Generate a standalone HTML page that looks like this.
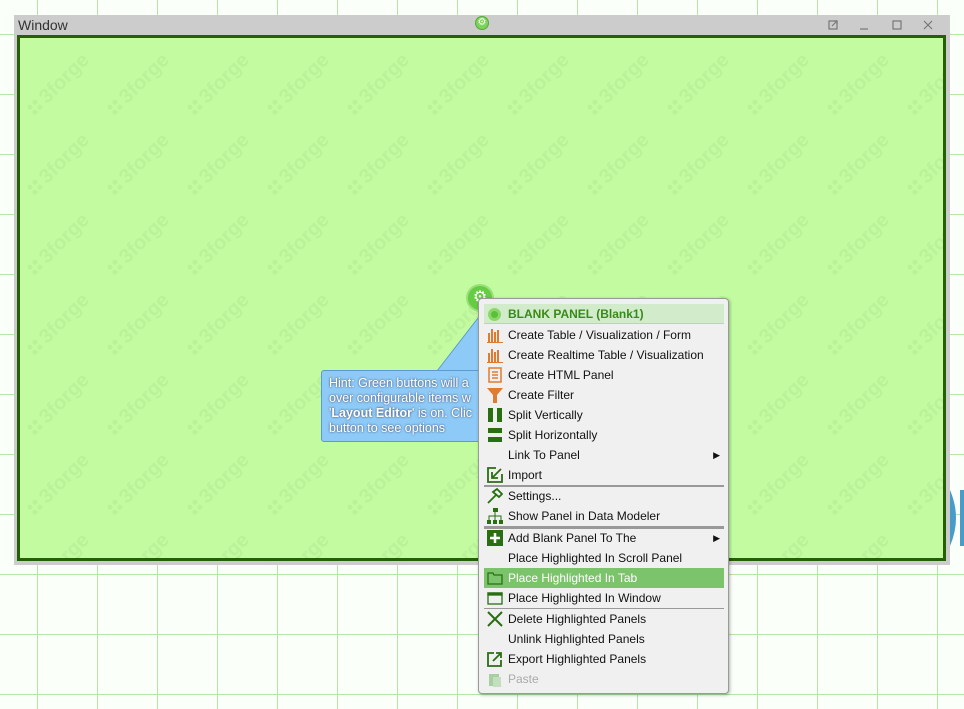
<!DOCTYPE html>
<html><head><meta charset="utf-8"><style>
*{box-sizing:border-box;margin:0;padding:0}
body{width:964px;height:709px;overflow:hidden;position:relative;background:#fbfffa;font-family:"Liberation Sans",Arial,sans-serif;
background-image:linear-gradient(to right,#b5e6a8 1px,transparent 1px),linear-gradient(to bottom,#b5e6a8 1px,transparent 1px);
background-size:60px 60px;background-position:37px 34px}
.win{position:absolute;left:14px;top:15px;width:936px;height:550px;background:#cccccc}
.title{position:absolute;left:4px;top:2px;font-size:14px;color:#333}
.panel{position:absolute;left:3px;top:20px;width:929px;height:526px;background:#c3fca0;border:3px solid #236006;overflow:hidden}
.menu{position:absolute;left:478px;top:298px;width:251px;height:396px;background:#f0f0f0;border:1px solid #9a9a9a;border-radius:4px;box-shadow:1px 1px 3px rgba(0,0,0,.3);font-size:12px;color:#111}
.it{position:absolute;left:5px;width:240px;height:20px;line-height:20px;padding-left:24px}
.ic{position:absolute;left:3px;top:2px;width:16px;height:16px}
.sep{position:absolute;left:5px;width:240px;height:2px;background:#999}
.arr{position:absolute;right:4px;top:0;font-size:9px}
.hint{position:absolute;left:321px;top:370px;width:160px;height:72px;background:#8ecaf7;border:1px solid #5a9bd0;border-radius:3px;color:#fff;font-size:12.5px;line-height:15px;padding:5px 7px;text-shadow:0 0 2px #335;overflow:hidden}
</style></head><body>
<div class="win">
<div class="title">Window</div>
<div style="position:absolute;left:461px;top:1px;width:14px;height:14px;border-radius:50%;background:#7bd35a;border:1px solid #5aa83a;color:#fff;font-size:10px;line-height:12px;text-align:center">⚙</div>
<svg style="position:absolute;left:814px;top:5px" width="110" height="12" stroke="#777" fill="none" stroke-width="1.2">
<rect x="1" y="1" width="8" height="8"/><path d="M4 6 L9 1 M6 1 H9 V4"/>
<path d="M32 9 H40"/><rect x="65" y="1" width="8" height="8"/><path d="M96 1 L104 9 M104 1 L96 9"/></svg>
<div class="panel">
<svg width="929" height="526" style="position:absolute;left:0;top:0">
<defs><pattern id="w" x="0" y="10" width="80" height="80" patternUnits="userSpaceOnUse">
<g transform="translate(10,62) rotate(-45)" fill="#b9f298"><circle cx="2" cy="-2" r="2.5"/><circle cx="2" cy="5" r="2.5"/><circle cx="9" cy="5" r="2.5"/><circle cx="9" cy="-2" r="2.5"/><text x="16" y="8" font-family="Liberation Sans" font-weight="bold" font-size="20">3forge</text></g>
</pattern></defs>
<rect width="929" height="526" fill="url(#w)"/></svg>
</div>
</div>
<svg style="position:absolute;left:948px;top:490px" width="16" height="56"><path d="M2 0 Q14 28 2 56 Z" fill="#4a9cc8"/><rect x="12" y="0" width="4" height="56" fill="#4a9cc8"/></svg>
<svg style="position:absolute;left:320px;top:280px" width="170" height="100"><path d="M117 91 L158 38 L170 38 L170 92 Z" fill="#8ecaf7"/><path d="M117 91 L158 38" stroke="#5a9bd0"/></svg>
<div class="hint">Hint: Green buttons will a<br>over configurable items w<br>'<b>Layout Editor</b>' is on. Clic<br>button to see options</div>
<div style="position:absolute;left:466px;top:284px;width:28px;height:28px;border-radius:50%;background:#66cc44;border:2px solid #9be07a;color:#fff;font-size:16px;line-height:24px;text-align:center">⚙</div>
<div class="menu">
<div class="it" style="top:5px;background:#d2eccb;color:#3a8a1a;font-weight:bold;border-bottom:1px solid #bcd">BLANK PANEL (Blank1)<span class="ic" style="border-radius:50%;background:#5cbf3a;width:13px;height:13px;top:4px;left:4px;border:3px solid #8ad86a"></span></div>
<div class="it" style="top:26px"><svg class="ic" viewBox="0 0 16 16" fill="#e07b32"><rect x="1" y="6" width="2" height="9"/><rect x="4" y="2" width="2" height="13"/><rect x="7" y="5" width="2" height="10"/><rect x="10" y="3" width="2" height="12"/><rect x="0" y="15" width="16" height="1"/></svg>Create Table / Visualization / Form</div>
<div class="it" style="top:46px"><svg class="ic" viewBox="0 0 16 16" fill="#e07b32"><rect x="1" y="6" width="2" height="9"/><rect x="4" y="2" width="2" height="13"/><rect x="7" y="5" width="2" height="10"/><rect x="10" y="3" width="2" height="12"/><rect x="0" y="15" width="16" height="1"/></svg>Create Realtime Table / Visualization</div>
<div class="it" style="top:66px"><svg class="ic" viewBox="0 0 16 16" fill="none" stroke="#e07b32" stroke-width="1.5"><rect x="2" y="1" width="12" height="14"/><path d="M5 5H11M5 8H11M5 11H11"/></svg>Create HTML Panel</div>
<div class="it" style="top:86px"><svg class="ic" viewBox="0 0 16 16" fill="#e07b32"><path d="M0 1H16L10 8V16H6V8Z"/></svg>Create Filter</div>
<div class="it" style="top:106px"><svg class="ic" viewBox="0 0 16 16" fill="#2a6e12"><rect x="1" y="1" width="5" height="14"/><rect x="10" y="1" width="5" height="14"/></svg>Split Vertically</div>
<div class="it" style="top:126px"><svg class="ic" viewBox="0 0 16 16" fill="#2a6e12"><rect x="1" y="1" width="14" height="5"/><rect x="1" y="10" width="14" height="5"/></svg>Split Horizontally</div>
<div class="it" style="top:146px">Link To Panel<span class="arr">▶</span></div>
<div class="it" style="top:166px"><svg class="ic" viewBox="0 0 16 16" fill="none" stroke="#2a6e12" stroke-width="1.8"><path d="M9 1H1V15H15V7"/><path d="M14 2L6 10M5 5V11H11"/></svg>Import</div>
<div class="sep" style="top:186px"></div>
<div class="it" style="top:187px"><svg class="ic" viewBox="0 0 16 16" fill="none" stroke="#2a6e12" stroke-width="1.8"><path d="M1 15L9 7M6 4L10 1L15 6L12 9Z"/></svg>Settings...</div>
<div class="it" style="top:207px"><svg class="ic" viewBox="0 0 16 16" fill="#2a6e12"><rect x="6" y="0" width="5" height="4"/><rect x="0" y="12" width="4" height="4"/><rect x="6" y="12" width="4" height="4"/><rect x="12" y="12" width="4" height="4"/><path d="M8 4V12M2 12V8H14V12" stroke="#2a6e12" fill="none"/></svg>Show Panel in Data Modeler</div>
<div class="sep" style="top:227px;height:3px"></div>
<div class="it" style="top:229px"><svg class="ic" viewBox="0 0 16 16"><rect width="16" height="16" fill="#2a6e12"/><path d="M8 3V13M3 8H13" stroke="#fff" stroke-width="2.5"/></svg>Add Blank Panel To The<span class="arr">▶</span></div>
<div class="it" style="top:249px">Place Highlighted In Scroll Panel</div>
<div class="it" style="top:269px;background:#7cc46c;color:#fff"><svg class="ic" viewBox="0 0 16 16" fill="none" stroke="#2a6e12" stroke-width="1.3"><path d="M1 3H6L7 5H15V14H1Z"/></svg>Place Highlighted In Tab</div>
<div class="it" style="top:289px"><svg class="ic" viewBox="0 0 16 16" fill="none" stroke="#2a6e12" stroke-width="1.3"><rect x="1" y="3" width="14" height="11"/><rect x="1" y="3" width="14" height="2" fill="#2a6e12"/></svg>Place Highlighted In Window</div>
<div class="sep" style="top:309px;height:1px"></div>
<div class="it" style="top:310px"><svg class="ic" viewBox="0 0 16 16" stroke="#2a6e12" stroke-width="2"><path d="M1 1L15 15M15 1L1 15"/></svg>Delete Highlighted Panels</div>
<div class="it" style="top:330px">Unlink Highlighted Panels</div>
<div class="it" style="top:350px"><svg class="ic" viewBox="0 0 16 16" fill="none" stroke="#2a6e12" stroke-width="1.8"><path d="M7 2H1V15H14V9"/><path d="M6 10L14 2M9 2H14V7"/></svg>Export Highlighted Panels</div>
<div class="it" style="top:370px;color:#aaa"><svg class="ic" viewBox="0 0 16 16" fill="#a8cfa0"><rect x="2" y="3" width="10" height="12"/><rect x="6" y="6" width="8" height="10" fill="#c4dfbf"/></svg>Paste</div>
</div>
</body></html>
